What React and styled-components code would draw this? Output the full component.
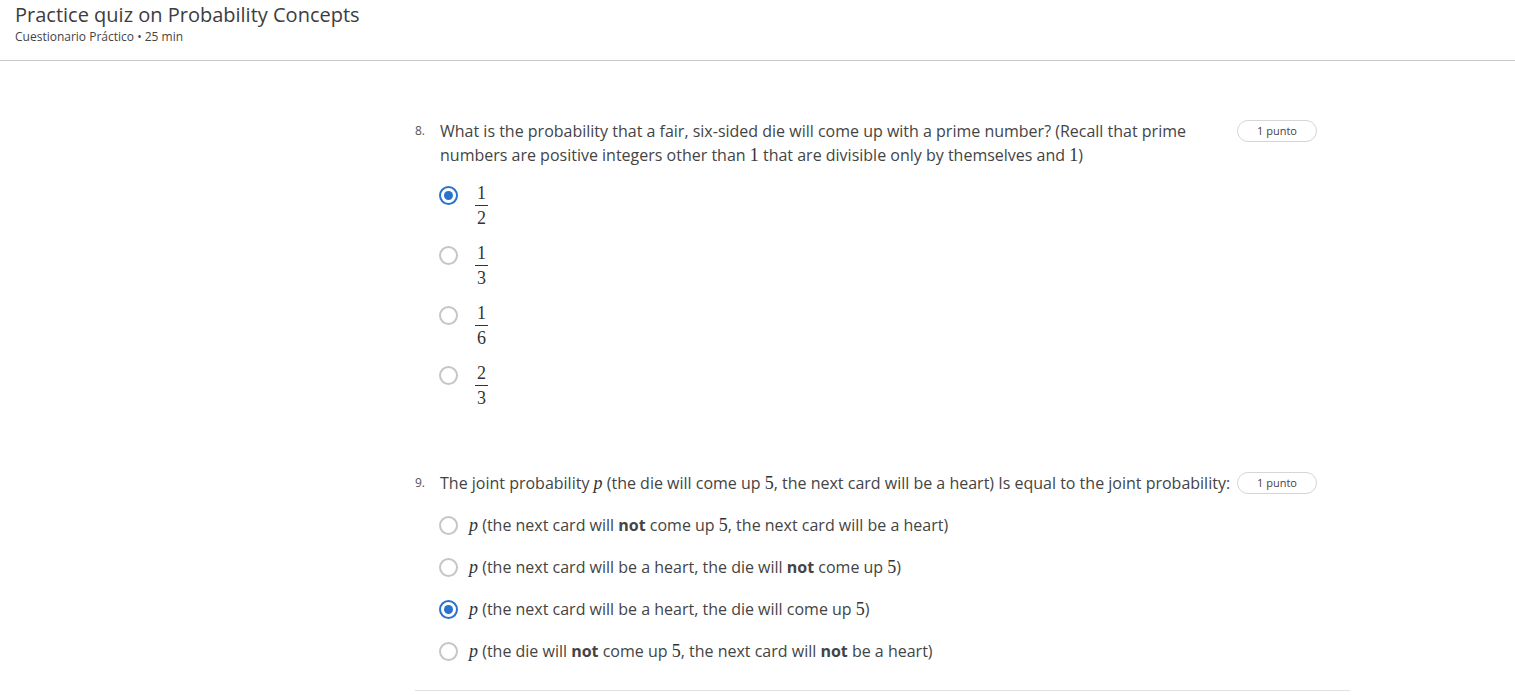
import React from 'react';
import styled, { createGlobalStyle } from 'styled-components';

const GlobalStyle = createGlobalStyle`
  body {
    margin: 0;
    background: #fff;
    font-family: "Open Sans", "Liberation Sans", sans-serif;
    color: #444;
  }
`;

const Header = styled.header`
  padding: 1px 15px 0;
  height: 59px;
  border-bottom: 1px solid #c9c9c9;
`;

const Title = styled.h1`
  margin: 0;
  font-size: 20px;
  line-height: 27px;
  font-weight: 400;
  color: #3d3d3d;
`;

const Subtitle = styled.div`
  font-size: 12px;
  line-height: 16px;
  margin-top: 1px;
  color: #444;
`;

const Main = styled.main`
  margin-left: 415px;
  width: 935px;
  padding-top: 58px;
  padding-bottom: 27px;
  border-bottom: 1px solid #e1e1e1;
`;

const Question = styled.section`
  margin-bottom: ${(p) => p.$gap || 0}px;
`;

const QuestionHead = styled.div`
  display: flex;
  align-items: flex-start;
  padding-right: 33px;
`;

const Number = styled.span`
  width: 25px;
  flex-shrink: 0;
  font-size: 12px;
  line-height: 24px;
  color: #555;
`;

const Prompt = styled.div`
  flex: 1;
  font-size: 16px;
  line-height: 24px;
  color: #444;
  padding-right: 4px;
`;

const Badge = styled.span`
  flex-shrink: 0;
  width: 80px;
  height: 22px;
  margin-top: 1px;
  box-sizing: border-box;
  border: 1px solid #d6d6d6;
  border-radius: 12px;
  font-size: 11px;
  line-height: 20px;
  text-align: center;
  color: #444;
`;

const Options = styled.div`
  display: flex;
  flex-direction: column;
  gap: ${(p) => p.$gap}px;
  margin: ${(p) => p.$top}px 0 0 24px;
`;

const Option = styled.label`
  display: flex;
  align-items: flex-start;
  gap: 11px;
  font-size: 16px;
  line-height: 24px;
  color: #444;
`;

const Radio = styled.span`
  flex-shrink: 0;
  width: 19px;
  height: 19px;
  margin-top: ${(p) => p.$top}px;
  box-sizing: border-box;
  border-radius: 50%;
  border: 2px solid ${(p) => (p.$checked ? '#2a73cc' : '#c6c6c6')};
  display: flex;
  align-items: center;
  justify-content: center;

  &::after {
    content: '';
    display: ${(p) => (p.$checked ? 'block' : 'none')};
    width: 9px;
    height: 9px;
    border-radius: 50%;
    background: #2a73cc;
  }
`;

const Math = styled.span`
  font-family: "Liberation Serif", "DejaVu Serif", serif;
  font-size: 18px;
  line-height: 1;
  font-style: ${(p) => (p.$italic ? 'italic' : 'normal')};
  color: #333;
`;

const Frac = styled.span`
  display: inline-flex;
  flex-direction: column;
  align-items: center;
  margin-left: 6px;
  font-family: "Liberation Serif", "DejaVu Serif", serif;
  font-size: 18px;
  line-height: 20px;
  color: #333;
`;

const Bar = styled.span`
  width: 13px;
  height: 1px;
  margin: 2px 0 2px;
  background: #333;
`;

const Fraction = ({ n, d }) => (
  <Frac>
    <span>{n}</span>
    <Bar />
    <span>{d}</span>
  </Frac>
);

const P = () => <Math $italic>p</Math>;
const N = ({ children }) => <Math>{children}</Math>;

const fracs = [
  ['1', '2', true],
  ['1', '3', false],
  ['1', '6', false],
  ['2', '3', false],
];

const q9 = [
  [<>(the next card will <b>not</b> come up <N>5</N>, the next card will be a heart)</>, false],
  [<>(the next card will be a heart, the die will <b>not</b> come up <N>5</N>)</>, false],
  [<>(the next card will be a heart, the die will come up <N>5</N>)</>, true],
  [<>(the die will <b>not</b> come up <N>5</N>, the next card will <b>not</b> be a heart)</>, false],
];

export default function App() {
  return (
    <>
      <GlobalStyle />
      <Header>
        <Title>Practice quiz on Probability Concepts</Title>
        <Subtitle>Cuestionario Práctico • 25 min</Subtitle>
      </Header>
      <Main>
        <Question $gap={63}>
          <QuestionHead>
            <Number>8.</Number>
            <Prompt>
              What is the probability that a fair, six-sided die will come up with a prime number? (Recall that prime
              numbers are positive integers other than <N>1</N> that are divisible only by themselves and <N>1</N>)
            </Prompt>
            <Badge>1 punto</Badge>
          </QuestionHead>
          <Options $gap={15} $top={16}>
            {fracs.map(([n, d, checked], i) => (
              <Option key={i}>
                <Radio $checked={checked} $top={3} />
                <Fraction n={n} d={d} />
              </Option>
            ))}
          </Options>
        </Question>
        <Question>
          <QuestionHead>
            <Number>9.</Number>
            <Prompt>
              The joint probability <P /> (the die will come up <N>5</N>, the next card will be a heart) Is equal to the joint probability:
            </Prompt>
            <Badge>1 punto</Badge>
          </QuestionHead>
          <Options $gap={18} $top={18}>
            {q9.map(([text, checked], i) => (
              <Option key={i}>
                <Radio $checked={checked} $top={3} />
                <span>
                  <P /> {text}
                </span>
              </Option>
            ))}
          </Options>
        </Question>
      </Main>
    </>
  );
}
